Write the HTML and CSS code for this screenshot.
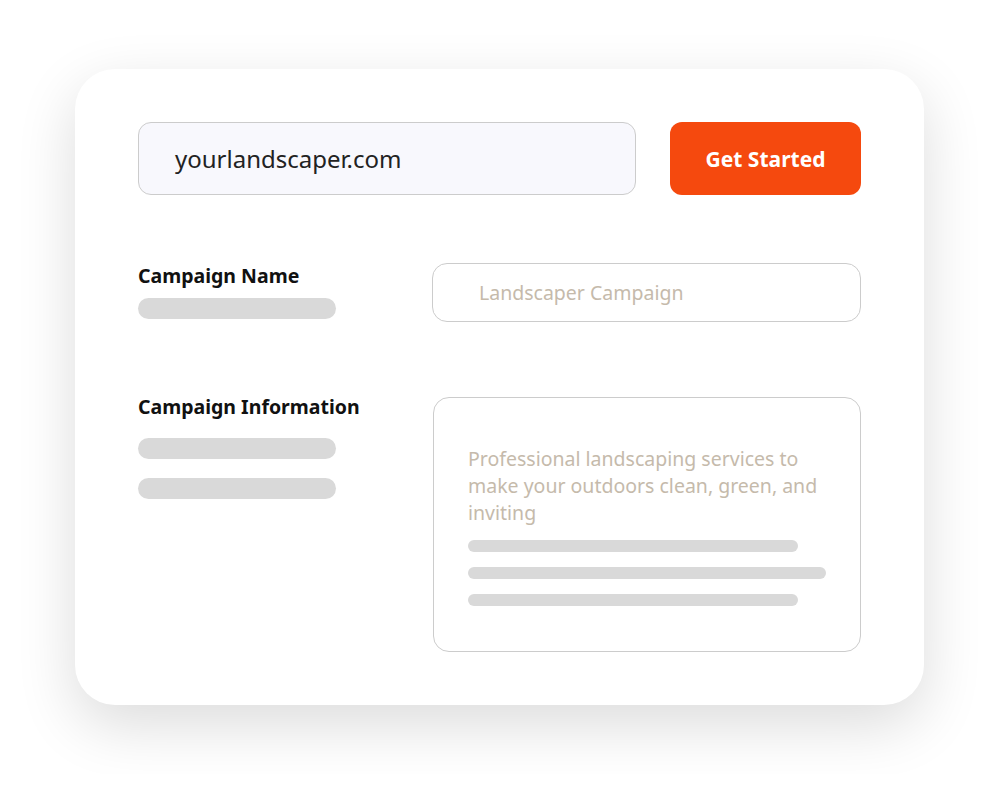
FILE: index.html
```html
<!DOCTYPE html>
<html lang="en">
<head>
    <meta charset="UTF-8">
    <meta name="viewport" content="width=device-width, initial-scale=1.0">
    <title>Campaign</title>
    <link rel="stylesheet" href="styles.css">
</head>
<body>

    <div class="stage">
        <div class="card">

            <!-- URL + button -->
            <div class="top-row">
                <div class="url-box">yourlandscaper.com</div>
                <div class="start-btn">Get Started</div>
            </div>

            <!-- campaign name -->
            <div class="field-row name-row">
                <div class="side">
                    <div class="label">Campaign Name</div>
                    <div class="bar bar-first"></div>
                </div>
                <div class="input-box">Landscaper Campaign</div>
            </div>

            <!-- campaign info -->
            <div class="field-row info-row">
                <div class="side">
                    <div class="label">Campaign Information</div>
                    <div class="bar bar-info"></div>
                    <div class="bar bar-info"></div>
                </div>
                <div class="text-box">
                    <p class="desc">Professional landscaping services to make your outdoors clean, green, and inviting</p>
                    <div class="line short"></div>
                    <div class="line"></div>
                    <div class="line short"></div>
                </div>
            </div>

        </div>
    </div>

</body>
</html>
```

FILE: styles.css
```css
body {
    margin: 0;
    background: #fff;
    font-family: "Noto Sans", "Open Sans", sans-serif;
}

.stage {
    padding: 69px 75px;
}

.card {
    height: 636px;
    box-sizing: border-box;
    background: #fff;
    border-radius: 40px;
    box-shadow: 0 20px 60px rgba(0, 0, 0, 0.14);
    padding: 53px 63px 0 63px;
}

.top-row {
    display: flex;
    gap: 34px;
}

.url-box {
    flex: 1;
    height: 73px;
    box-sizing: border-box;
    background: #f8f8fd;
    border: 1.5px solid #cccccc;
    border-radius: 13px;
    padding-left: 36px;
    display: flex;
    align-items: center;
    font-size: 24px;
    color: #222;
}

.start-btn {
    width: 191px;
    height: 73px;
    background: #f5490e;
    border-radius: 12px;
    color: #fff;
    font-weight: 700;
    font-size: 21px;
    display: flex;
    align-items: center;
    justify-content: center;
}

.field-row {
    display: flex;
}

.side {
    width: 294px;
}

.name-row {
    margin-top: 68px;
}

.info-row {
    margin-top: 72px;
}

.label {
    font-size: 19.5px;
    font-weight: 700;
    line-height: 26px;
    color: #111;
}

.bar {
    width: 198px;
    height: 21px;
    border-radius: 11px;
    background: #d9d9d9;
}

.bar-first {
    margin-top: 9px;
}

.bar-info {
    margin-top: 18px;
}

.bar-info + .bar-info {
    margin-top: 19px;
}

.input-box {
    width: 429px;
    height: 59px;
    box-sizing: border-box;
    border: 1.5px solid #cccccc;
    border-radius: 15px;
    padding-left: 46px;
    display: flex;
    align-items: center;
    font-size: 19.5px;
    color: #c5baab;
}

.text-box {
    width: 428px;
    height: 255px;
    margin-top: 3px;
    margin-left: 1px;
    box-sizing: border-box;
    border: 1.5px solid #cccccc;
    border-radius: 16px;
    padding: 47px 30px 0 34px;
}

.desc {
    margin: 0;
    font-size: 19.5px;
    line-height: 27px;
    color: #c5baab;
}

.line {
    width: 358px;
    height: 12px;
    border-radius: 6px;
    background: #d9d9d9;
    margin-top: 15px;
}

.line.short {
    width: 330px;
}

.desc + .line {
    margin-top: 14px;
}
```
